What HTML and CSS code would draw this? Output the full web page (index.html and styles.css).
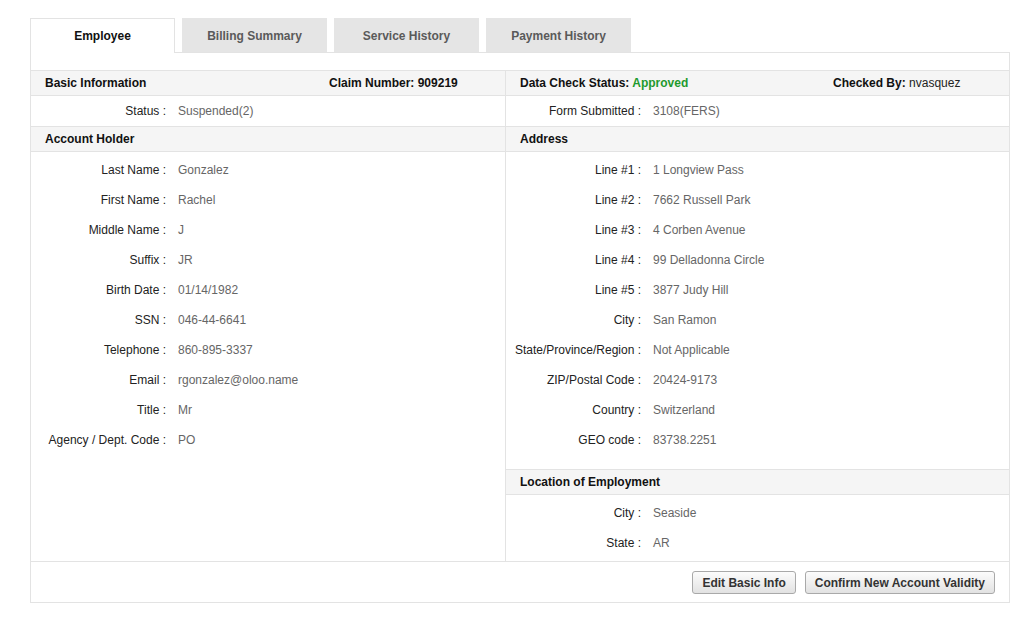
FILE: index.html
```html
<!DOCTYPE html>
<html>
<head>
<meta charset="utf-8">
<link rel="stylesheet" href="styles.css">
</head>
<body>
<div class="page">
  <div class="tabs">
    <div class="tab active">Employee</div>
    <div class="tab">Billing Summary</div>
    <div class="tab">Service History</div>
    <div class="tab">Payment History</div>
  </div>
  <div class="panel">
    <div class="cols">
      <div class="col left">
        <div class="head">
          <span class="h-first h-left">Basic Information</span>
          <span>Claim Number: 909219</span>
        </div>
        <div class="row single"><span class="lbl">Status :</span><span class="val">Suspended(2)</span></div>
        <div class="head"><span>Account Holder</span></div>
        <div class="list">
          <div class="row"><span class="lbl">Last Name :</span><span class="val">Gonzalez</span></div>
          <div class="row"><span class="lbl">First Name :</span><span class="val">Rachel</span></div>
          <div class="row"><span class="lbl">Middle Name :</span><span class="val">J</span></div>
          <div class="row"><span class="lbl">Suffix :</span><span class="val">JR</span></div>
          <div class="row"><span class="lbl">Birth Date :</span><span class="val">01/14/1982</span></div>
          <div class="row"><span class="lbl">SSN :</span><span class="val">046-44-6641</span></div>
          <div class="row"><span class="lbl">Telephone :</span><span class="val">860-895-3337</span></div>
          <div class="row"><span class="lbl">Email :</span><span class="val">rgonzalez@oloo.name</span></div>
          <div class="row"><span class="lbl">Title :</span><span class="val">Mr</span></div>
          <div class="row"><span class="lbl">Agency / Dept. Code :</span><span class="val">PO</span></div>
        </div>
      </div>
      <div class="col right">
        <div class="head">
          <span class="h-first h-right">Data Check Status: <span class="ok">Approved</span></span>
          <span>Checked By: <span class="plain">nvasquez</span></span>
        </div>
        <div class="row single"><span class="lbl">Form Submitted :</span><span class="val">3108(FERS)</span></div>
        <div class="head"><span>Address</span></div>
        <div class="list address">
          <div class="row"><span class="lbl">Line #1 :</span><span class="val">1 Longview Pass</span></div>
          <div class="row"><span class="lbl">Line #2 :</span><span class="val">7662 Russell Park</span></div>
          <div class="row"><span class="lbl">Line #3 :</span><span class="val">4 Corben Avenue</span></div>
          <div class="row"><span class="lbl">Line #4 :</span><span class="val">99 Delladonna Circle</span></div>
          <div class="row"><span class="lbl">Line #5 :</span><span class="val">3877 Judy Hill</span></div>
          <div class="row"><span class="lbl">City :</span><span class="val">San Ramon</span></div>
          <div class="row"><span class="lbl">State/Province/Region :</span><span class="val">Not Applicable</span></div>
          <div class="row"><span class="lbl">ZIP/Postal Code :</span><span class="val">20424-9173</span></div>
          <div class="row"><span class="lbl">Country :</span><span class="val">Switzerland</span></div>
          <div class="row"><span class="lbl">GEO code :</span><span class="val">83738.2251</span></div>
        </div>
        <div class="head"><span>Location of Employment</span></div>
        <div class="list last">
          <div class="row"><span class="lbl">City :</span><span class="val">Seaside</span></div>
          <div class="row"><span class="lbl">State :</span><span class="val">AR</span></div>
        </div>
      </div>
    </div>
    <div class="footer">
      <button class="btn">Edit Basic Info</button>
      <button class="btn">Confirm New Account Validity</button>
    </div>
  </div>
</div>
</body>
</html>
```

FILE: styles.css
```css
* { box-sizing: border-box; }
body {
  margin: 0;
  background: #fff;
  font-family: "Liberation Sans", Arial, sans-serif;
  font-size: 12px;
  color: #333;
}
.page {
  padding: 18px 0 0 30px;
  width: 1010px;
}
.tabs {
  display: flex;
  gap: 7px;
  position: relative;
  z-index: 1;
}
.tab {
  width: 145px;
  height: 34px;
  line-height: 34px;
  padding-top: 1px;
  text-align: center;
  font-weight: bold;
  color: #5a5a5a;
  background: #e5e5e5;
}
.tab.active {
  background: #fff;
  color: #111;
  border: 1px solid #e3e3e3;
  border-bottom: none;
  height: 35px;
  line-height: 34px;
  padding-top: 0;
  margin-bottom: -1px;
}
.panel {
  border: 1px solid #e3e3e3;
  padding-top: 17px;
}
.cols {
  display: grid;
  grid-template-columns: 475px 1fr;
}
.col.left {
  border-right: 1px solid #e3e3e3;
}
.head {
  display: flex;
  height: 26px;
  align-items: center;
  padding-left: 14px;
  background: #f5f5f5;
  border-top: 1px solid #e3e3e3;
  border-bottom: 1px solid #e3e3e3;
  font-weight: bold;
  color: #111;
}
.h-left { width: 284px; }
.h-right { width: 313px; }
.ok { color: #1e9a2e; }
.plain { font-weight: normal; color: #222; }
.row {
  display: flex;
  height: 30px;
  align-items: center;
}
.lbl {
  width: 135px;
  text-align: right;
  color: #222;
  white-space: nowrap;
}
.val {
  padding-left: 12px;
  color: #666;
}
.list {
  padding-top: 3px;
}
.list.address {
  padding-bottom: 14px;
}
.list.last {
  padding-bottom: 3px;
}
.footer {
  display: flex;
  justify-content: flex-end;
  align-items: center;
  gap: 9px;
  height: 41px;
  padding-right: 14px;
  padding-top: 1px;
  border-top: 1px solid #e3e3e3;
}
.btn {
  height: 23px;
  padding: 0 9px;
  font-family: "Liberation Sans", Arial, sans-serif;
  font-size: 12px;
  font-weight: bold;
  color: #333;
  background: linear-gradient(#fcfcfc, #e2e2e2);
  border: 1px solid #a9a9a9;
  border-radius: 3px;
}
```
